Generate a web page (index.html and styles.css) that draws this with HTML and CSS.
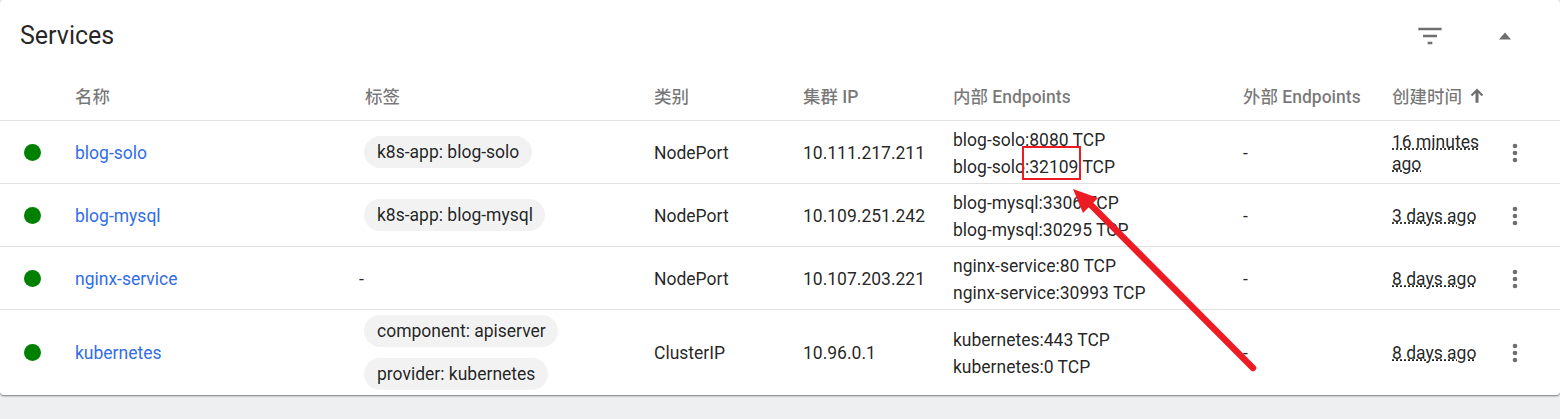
FILE: index.html
```html
<!DOCTYPE html>
<html lang="zh">
<head>
<meta charset="utf-8">
<title>Services</title>
<link rel="stylesheet" href="styles.css">
</head>
<body>
<section class="card">
  <header class="card-head">
    <h2 class="card-title">Services</h2>
    <div class="card-actions">
      <svg class="ic-filter" viewBox="0 0 24 24" width="28" height="28"><path d="M2 5h20v2H2zM6 11h12v2H6zM10 17h4v2h-4z"/></svg>
      <svg class="ic-caret" viewBox="0 0 24 24" width="28" height="28"><path d="M6.8 15L12 9l5.2 6z"/></svg>
    </div>
  </header>
  <div class="table">
    <div class="row head">
      <div></div><div>名称</div><div>标签</div><div>类别</div><div>集群 IP</div><div>内部 Endpoints</div><div>外部 Endpoints</div>
      <div class="sorted">创建时间<svg viewBox="0 0 24 24" width="20" height="20"><path d="M4.5 10.5l1.8 1.8 3.9-3.9V20h3.6V8.4l3.9 3.9 1.8-1.8L12 3z"/></svg></div><div></div>
    </div>
    <div class="row">
      <div><span class="dot"></span></div><div><a class="link">blog-solo</a></div>
      <div class="chips"><span class="chip">k8s-app: blog-solo</span></div>
      <div>NodePort</div><div>10.111.217.211</div>
      <div class="eps"><div>blog-solo:8080 TCP</div><div>blog-solo:32109 TCP</div></div>
      <div>-</div><div class="age"><span>16 minutes ago</span></div>
      <div class="menu"><svg viewBox="0 0 24 24" width="28" height="28"><path d="M12 8a2 2 0 1 0 0-4 2 2 0 0 0 0 4zm0 2a2 2 0 1 0 0 4 2 2 0 0 0 0-4zm0 6a2 2 0 1 0 0 4 2 2 0 0 0 0-4z"/></svg></div>
    </div>
    <div class="row">
      <div><span class="dot"></span></div><div><a class="link">blog-mysql</a></div>
      <div class="chips"><span class="chip">k8s-app: blog-mysql</span></div>
      <div>NodePort</div><div>10.109.251.242</div>
      <div class="eps"><div>blog-mysql:3306 TCP</div><div>blog-mysql:30295 TCP</div></div>
      <div>-</div><div class="age"><span>3 days ago</span></div>
      <div class="menu"><svg viewBox="0 0 24 24" width="28" height="28"><path d="M12 8a2 2 0 1 0 0-4 2 2 0 0 0 0 4zm0 2a2 2 0 1 0 0 4 2 2 0 0 0 0-4zm0 6a2 2 0 1 0 0 4 2 2 0 0 0 0-4z"/></svg></div>
    </div>
    <div class="row">
      <div><span class="dot"></span></div><div><a class="link">nginx-service</a></div>
      <div class="none">-</div>
      <div>NodePort</div><div>10.107.203.221</div>
      <div class="eps"><div>nginx-service:80 TCP</div><div>nginx-service:30993 TCP</div></div>
      <div>-</div><div class="age"><span>8 days ago</span></div>
      <div class="menu"><svg viewBox="0 0 24 24" width="28" height="28"><path d="M12 8a2 2 0 1 0 0-4 2 2 0 0 0 0 4zm0 2a2 2 0 1 0 0 4 2 2 0 0 0 0-4zm0 6a2 2 0 1 0 0 4 2 2 0 0 0 0-4z"/></svg></div>
    </div>
    <div class="row tall">
      <div><span class="dot"></span></div><div><a class="link">kubernetes</a></div>
      <div class="chips"><span class="chip">component: apiserver</span><span class="chip">provider: kubernetes</span></div>
      <div>ClusterIP</div><div>10.96.0.1</div>
      <div class="eps"><div>kubernetes:443 TCP</div><div>kubernetes:0 TCP</div></div>
      <div>-</div><div class="age"><span>8 days ago</span></div>
      <div class="menu"><svg viewBox="0 0 24 24" width="28" height="28"><path d="M12 8a2 2 0 1 0 0-4 2 2 0 0 0 0 4zm0 2a2 2 0 1 0 0 4 2 2 0 0 0 0-4zm0 6a2 2 0 1 0 0 4 2 2 0 0 0 0-4z"/></svg></div>
    </div>
  </div>
</section>
<svg class="annotation" viewBox="0 0 1560 419" width="1560" height="419">
  <rect class="anno-box" x="1023" y="147" width="57" height="32"/>
  <path class="anno-line" d="M1253 368L1085 199"/>
  <path class="anno-head" d="M1073 189L1098 198L1083 213z"/>
</svg>
</body>
</html>
```
FILE: styles.css
```css
* { box-sizing: border-box; }
html, body { margin: 0; height: 419px; overflow: hidden; }
body {
  background: #eeeff1;
  font-family: Roboto, "Noto Sans CJK SC", sans-serif;
  font-size: 17.5px;
  color: rgba(0, 0, 0, .87);
  position: relative;
}
.card {
  height: 395px;
  background: #fff;
  border-radius: 4px;
  box-shadow: 0 1px 2px rgba(0, 0, 0, .5);
}
.card-head {
  height: 71px;
  display: flex;
  align-items: center;
  justify-content: space-between;
  padding-left: 20px;
}
.card-title { margin: 0; font-size: 25px; font-weight: 400; }
.card-actions { display: flex; align-items: center; gap: 47px; padding-right: 41px; fill: #6f6f6f; }
.row {
  display: grid;
  grid-template-columns: 75px 290px 289px 149px 150px 290px 149px 98px 70px;
  align-items: center;
  height: 63px;
  padding-top: 1px;
  border-bottom: 1px solid #e0e0e0;
}
.row.head {
  height: 50px;
  padding-top: 0;
  color: rgba(0, 0, 0, .54);
  font-weight: 500;
}
.row.tall { height: 85px; padding-top: 0; border-bottom: 0; }
.sorted { display: flex; align-items: center; gap: 5px; }
.sorted svg { fill: #6f6f6f; }
.dot {
  display: block;
  width: 17px;
  height: 17px;
  margin-left: 24px;
  border-radius: 50%;
  background: #008000;
}
.link { color: #326de6; }
.chips { display: flex; flex-direction: column; align-items: flex-start; gap: 11px; margin: -1px 0 0 -1px; }
.tall .chips { margin-top: 0; }
.chip {
  height: 32px;
  padding: 0 12.5px 0 13px;
  border-radius: 16px;
  background: #f2f2f2;
  display: flex;
  align-items: center;
}
.none { margin-left: -6px; }
.eps { line-height: 27px; padding-top: 2px; }
.age { line-height: 22px; }
.age span { text-decoration: underline dotted; }
.menu { display: flex; padding-left: 11px; fill: #6f6f6f; }
.annotation { position: absolute; left: 0; top: 0; pointer-events: none; }
.anno-box { fill: none; stroke: #ed1c24; stroke-width: 2; }
.anno-line { fill: none; stroke: #ed1c24; stroke-width: 6.5; stroke-linecap: round; }
.anno-head { fill: #ed1c24; }
```
